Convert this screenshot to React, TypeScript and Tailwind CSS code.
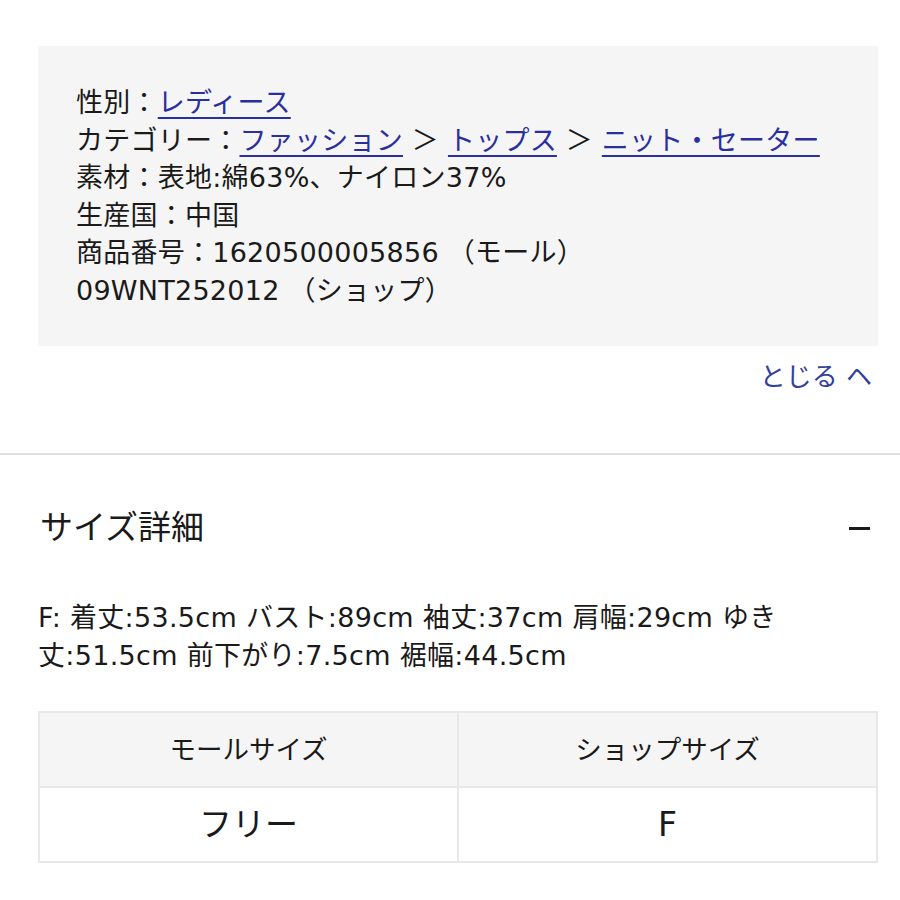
export default function App() {
  const font = { fontFamily: '"DejaVu Sans", "Noto Sans CJK JP", sans-serif' };
  const link = 'text-[#2b2f9e] underline decoration-[2px] underline-offset-[5px]';
  return (
    <div lang="ja" className="min-h-screen w-[900px] bg-white text-[#1a1a1a]" style={font}>
      <div className="pt-[46px]">
        <div className="ml-[38px] mr-[22px] bg-[#f5f5f5] pl-[38px] pr-4 pt-[38px] pb-[37px] text-[27px] leading-[37.5px] tracking-[0.25px]">
          <div>
            性別：<a className={link}>レディース</a>
          </div>
          <div>
            カテゴリー：<a className={link}>ファッション</a> ＞ <a className={link}>トップス</a> ＞{' '}
            <a className={link}>ニット・セーター</a>
          </div>
          <div>素材：表地:綿63%、ナイロン37%</div>
          <div>生産国：中国</div>
          <div>商品番号：1620500005856 （モール）</div>
          <div>09WNT252012 （ショップ）</div>
        </div>
        <div className="flex justify-end pr-[28px] pt-[13px] text-[26px] leading-[36px] text-[#33419a]">
          <span>とじる ヘ</span>
        </div>
      </div>
      <div className="mt-[58px] h-[2px] bg-[#e0e0e0]" />
      <div className="flex items-center justify-between pl-[40px] pr-[30px] pt-[53px] text-[33px] leading-[40px]">
        <span>サイズ詳細</span>
        <span className="block h-[3px] w-[21px] bg-[#1a1a1a]" />
      </div>
      <div className="pl-[38px] pr-4 pt-[51px] text-[27px] leading-[38px] tracking-[0.3px]">
        F: 着丈:53.5cm バスト:89cm 袖丈:37cm 肩幅:29cm ゆき
        <br />
        丈:51.5cm 前下がり:7.5cm 裾幅:44.5cm
      </div>
      <div className="ml-[38px] mr-[22px] mt-[36px] grid grid-cols-2 gap-[2px] border-2 border-[#e8e8e8] bg-[#e8e8e8]">
        <div className="flex h-[73px] items-center justify-center bg-[#f5f5f5] text-[26.5px]">モールサイズ</div>
        <div className="flex h-[73px] items-center justify-center bg-[#f5f5f5] text-[26.5px]">ショップサイズ</div>
        <div className="flex h-[73px] items-center justify-center bg-white text-[33px]">フリー</div>
        <div className="flex h-[73px] items-center justify-center bg-white text-[33px]">F</div>
      </div>
    </div>
  );
}
